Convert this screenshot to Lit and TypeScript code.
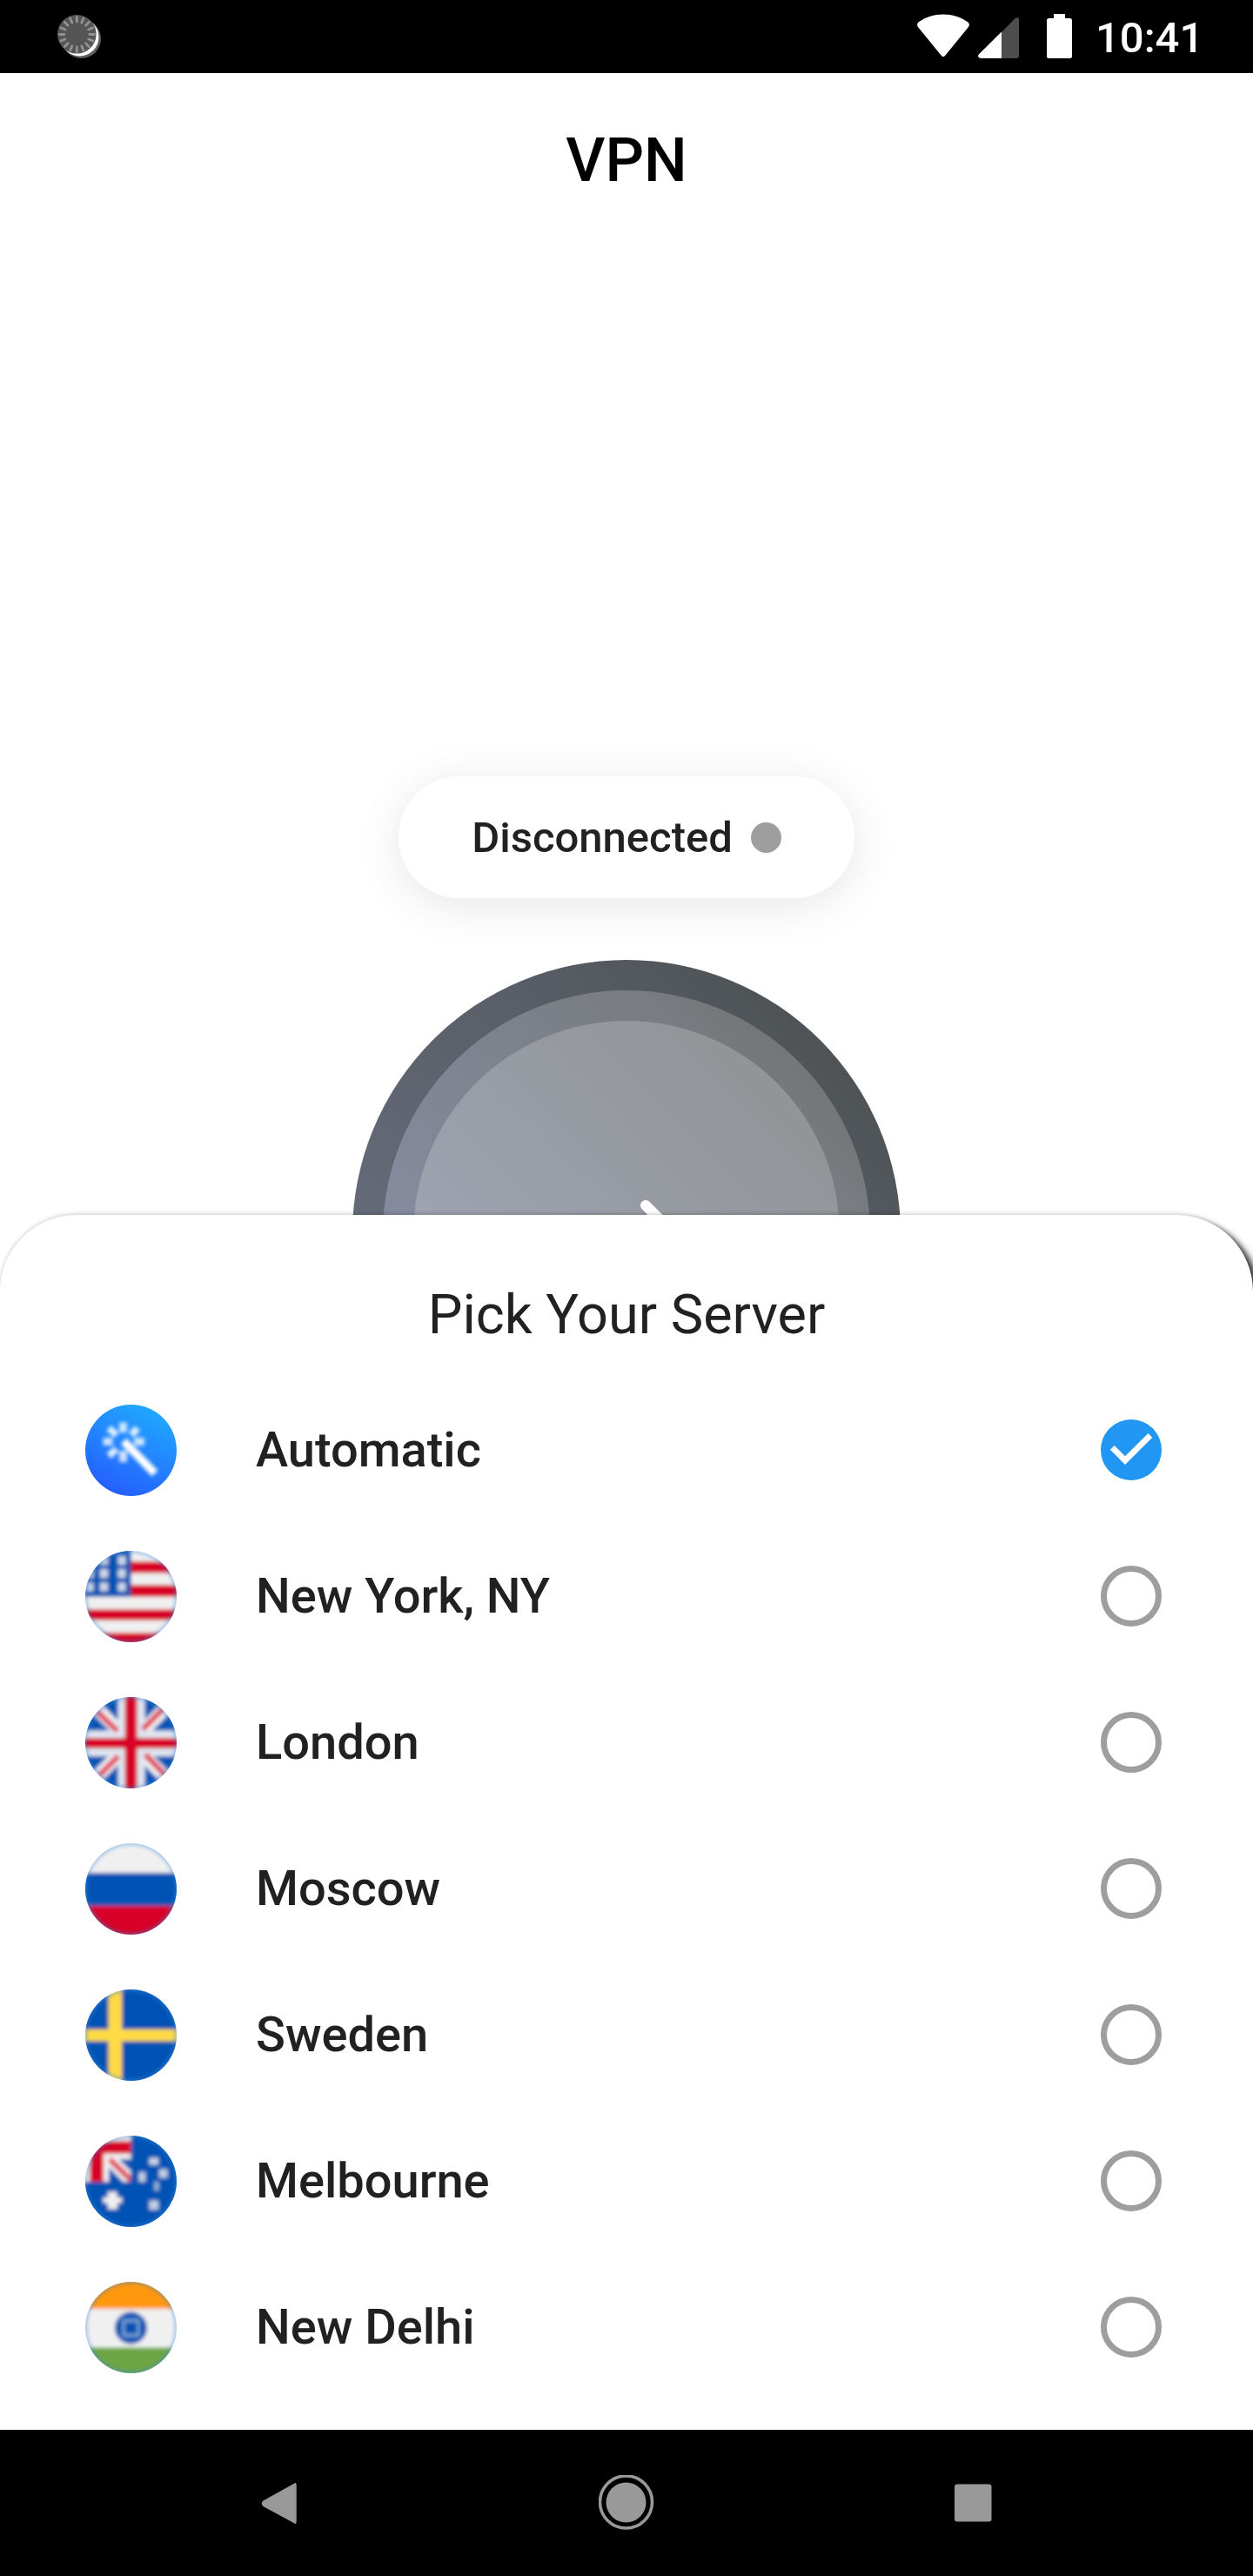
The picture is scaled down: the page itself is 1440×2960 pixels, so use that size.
import { LitElement, html, css, svg } from "lit";
import { customElement, property, state } from "lit/decorators.js";

type Flag = "auto" | "us" | "uk" | "ru" | "se" | "au" | "in";

interface Server {
  flag: Flag;
  name: string;
}

const SERVERS: Server[] = [
  { flag: "auto", name: "Automatic" },
  { flag: "us", name: "New York, NY" },
  { flag: "uk", name: "London" },
  { flag: "ru", name: "Moscow" },
  { flag: "se", name: "Sweden" },
  { flag: "au", name: "Melbourne" },
  { flag: "in", name: "New Delhi" },
];

const BLUE = "#0052b4";
const RED = "#d80027";
const PALE = "#f0f0f0";

const rect = (x: number, y: number, w: number, h: number, fill: string, opacity = 1) =>
  svg`<rect x=${x} y=${y} width=${w} height=${h} fill=${fill} opacity=${opacity} />`;

const line = (d: string, stroke: string, width: number) =>
  svg`<path d=${d} stroke=${stroke} stroke-width=${width} fill="none" />`;

const art: Record<Flag, () => unknown> = {
  auto: () => svg`
    <g stroke="#fff" fill="none">
      <path d="M44 42 L80 79" stroke-width="9.500" />
      <path d="M43.500 20.500 V32 M43.500 53 V66 M20.500 42.500 H31.500 M56 42.500 H68" stroke-width="9" opacity="0.780" />
      <path d="M27 27 L36 35 M60 27 L53 35 M27 59 L36 51" stroke-width="8" opacity="0.850" />
    </g>`,
  us: () => svg`
    ${rect(-5, -5, 115, 115, PALE)}
    ${rect(52, 12, 60, 13.5, RED)}
    ${rect(52, 39, 60, 14, RED)}
    ${rect(-5, 67, 115, 13, RED)}
    ${rect(-5, 94, 115, 16, RED)}
    ${rect(-5, -5, 57.5, 58, BLUE)}
    ${[11, 26, 41.5].map((y) => [5, 21.5, 42].map((x) => rect(x - 4.5, y - 5, 9, 10, PALE, 0.85)))}`,
  uk: () => svg`
    ${rect(-5, -5, 115, 115, BLUE)}
    ${line("M0 0 L105 105 M105 0 L0 105", PALE, 15)}
    ${rect(37.5, -5, 31, 115, "#dfe6f0")}
    ${rect(-5, 38.5, 115, 29.5, "#dfe6f0")}
    ${line("M12 15 L37 39 M91 12 L66 37 M15 91 L38 68 M69 66 L93 91", "#e2455f", 6.5)}
    ${rect(45.5, -5, 14, 115, RED)}
    ${rect(-5, 47, 115, 12, RED)}`,
  ru: () => svg`
    ${rect(-5, -5, 115, 40, PALE)}
    ${rect(-5, 34, 115, 38, BLUE)}
    ${rect(-5, 72, 115, 40, RED)}`,
  se: () => svg`
    ${rect(-5, -5, 115, 115, BLUE)}
    ${rect(26.5, -5, 15.5, 115, "#ffda44")}
    ${rect(-5, 46, 115, 13.5, "#ffda44")}`,
  au: () => svg`
    ${rect(-5, -5, 115, 115, BLUE)}
    ${rect(-5, -5, 57.5, 58, PALE)}
    ${rect(27, 27, 25.5, 26, BLUE)}
    ${line("M26 25 L52 51", PALE, 15)}
    ${rect(5, 6, 47.5, 14.5, RED)}
    ${rect(5, 6, 16, 47, RED)}
    ${line("M28 27 L52.500 51", "#e2455f", 6.5)}
    ${rect(52.5, 27, 20, 32, BLUE)}
    ${rect(-5, 53, 80, 12, BLUE)}
    <path d="M26 64.500 H36.500 V71 H42 V77.500 H37 V84.500 H26 V77.500 H20.500 V71 H26 Z" fill=${PALE} />
    ${rect(73.5, 25.5, 10.5, 8, PALE, 0.85)}
    ${rect(85, 38.5, 9.5, 10, PALE, 0.8)}
    ${rect(61.5, 42, 7.5, 11, PALE, 0.8)}
    ${rect(79.5, 53, 5, 10, PALE, 0.65)}
    ${rect(73.5, 74.5, 10.5, 10.5, PALE, 0.8)}`,
  in: () => svg`
    ${rect(-5, -5, 115, 36, "#ff9811")}
    ${rect(-5, 31, 115, 44.5, PALE)}
    ${rect(-5, 75.5, 115, 40, "#6da544")}
    <circle cx="52.500" cy="53" r="18.500" fill=${BLUE} />
    <rect x="44" y="44.500" width="17" height="17" fill="none" stroke="#7fa9da" stroke-width="3" />`,
};

@customElement("server-badge")
class ServerBadge extends LitElement {
  @property() flag: Flag = "auto";

  static styles = css`
    :host {
      display: block;
      width: 105px;
      height: 105px;
    }
    .art {
      display: block;
    }
  `;

  render() {
    const auto = this.flag === "auto";
    return html`<svg class="art" width="105" height="105" viewBox="0 0 105 105">
      <defs>
        <clipPath id="round"><circle cx="52.5" cy="52.5" r="52.5" /></clipPath>
        <filter id="soft" x="-10%" y="-10%" width="120%" height="120%">
          <feGaussianBlur stdDeviation="1.9" />
        </filter>
        <linearGradient id="sky" x1="0.3" y1="1" x2="0.75" y2="0.05">
          <stop offset="0" stop-color="#255cff" />
          <stop offset="1" stop-color="#20a8ff" />
        </linearGradient>
      </defs>
      <g clip-path="url(#round)">
        ${auto ? svg`<rect width="105" height="105" fill="url(#sky)" />` : null}
        <g filter="url(#soft)">${art[this.flag]()}</g>
        ${auto
          ? null
          : svg`<circle cx="52.5" cy="52.5" r="52.5" fill="none" stroke="#3c8be0" stroke-width="4" opacity="0.5" filter="url(#soft)" />`}
      </g>
    </svg>`;
  }
}

@customElement("server-row")
class ServerRow extends LitElement {
  @property() flag: Flag = "auto";
  @property() name = "";
  @property({ type: Boolean }) selected = false;

  static styles = css`
    :host {
      display: flex;
      align-items: center;
      height: 168px;
      padding: 0 105px 0 98px;
      box-sizing: border-box;
    }
    .name {
      flex: 1;
      margin-left: 91px;
      font: 500 56px/66px Roboto, sans-serif;
      color: #212121;
    }
    .ring {
      box-sizing: border-box;
      width: 70px;
      height: 70px;
      border: 7px solid #9e9e9e;
      border-radius: 50%;
    }
    .check {
      display: block;
    }
  `;

  render() {
    return html`
      <server-badge .flag=${this.flag}></server-badge>
      <span class="name">${this.name}</span>
      ${this.selected
        ? html`<svg class="check" width="70" height="70" viewBox="0 0 70 70">
            <circle cx="35" cy="35" r="35" fill="#2196f3" />
            <path d="M28 42.200 L15.700 29.900 L10.900 34.700 L28 52 L59.300 20.700 L54.500 15.900 Z" fill="#fff" />
          </svg>`
        : html`<span class="ring"></span>`}
    `;
  }
}

@customElement("status-bar")
class StatusBar extends LitElement {
  static styles = css`
    :host {
      display: flex;
      height: 84px;
      background: #000;
      box-sizing: border-box;
      padding: 0 56px 0 60px;
      justify-content: space-between;
    }
    .icons {
      display: flex;
    }
    .icon {
      display: block;
    }
    .signal {
      margin-left: 10px;
    }
    .battery {
      margin-left: 32px;
    }
    .clock {
      width: 125px;
      margin-left: 27px;
      padding-top: 15px;
      font: 500 49px/58px Roboto, sans-serif;
      color: #fff;
      white-space: nowrap;
    }
  `;

  render() {
    const ticks = Array.from({ length: 16 }, (_, i) => i * 22.5);
    return html`
      <svg class="icon" width="60" height="84" viewBox="60 0 60 84">
        <circle cx="93.500" cy="44.500" r="22.500" fill="#5e5e5e" />
        <circle cx="91.500" cy="42.500" r="22" fill="#fff" />
        <circle cx="88.300" cy="39.300" r="22.300" fill="#555" />
        ${ticks.map(
          (a) => svg`<path d="M88.300 19.500 V25" transform=${`rotate(${a} 88.300 39.500)`}
            stroke="#919191" stroke-width="2.800" stroke-linecap="round" />`,
        )}
      </svg>
      <div class="icons">
        <svg class="icon" width="60" height="84" viewBox="0 0 60 84">
          <path d="M1.500 25.500 C18 13.500 42 13.500 58.500 25.500 Q61 28 59 31 L32.500 63.500 Q30 67 27.500 63.500 L1 31 Q-1 28 1.500 25.500 Z" fill="#fff" />
        </svg>
        <svg class="icon signal" width="47" height="84" viewBox="0 0 47 84">
          <path d="M27 37 L43 20.800 Q47 18.500 47 23 V64 Q47 67 44 67 H27 Z" fill="#4d4d4d" />
          <path d="M27 36.500 V67 H3 Q-1.500 66 .8 62.500 Z" fill="#fff" />
        </svg>
        <svg class="icon battery" width="29" height="84" viewBox="0 0 29 84">
          <path d="M8 16 H21 V21 H26.500 Q29 21 29 23.500 V64.500 Q29 67 26.500 67 H2.500 Q0 67 0 64.500 V23.500 Q0 21 2.500 21 H8 Z" fill="#fff" />
        </svg>
        <span class="clock">10:41</span>
      </div>
    `;
  }
}

@customElement("nav-bar")
class NavBar extends LitElement {
  static styles = css`
    :host {
      display: flex;
      height: 168px;
      background: #000;
      align-items: center;
      justify-content: center;
      gap: 334px;
    }
    .icon {
      display: block;
    }
  `;

  render() {
    return html`
      <svg class="icon" width="64" height="64" viewBox="0 0 64 64">
        <path d="M47.500 10 Q50.700 7.500 50.700 12 V53.500 Q50.700 57.500 47.500 55 L12.500 36 Q9 32.500 12.500 29.500 Z" fill="#999" />
      </svg>
      <svg class="icon" width="64" height="64" viewBox="0 0 64 64">
        <circle cx="31.500" cy="31" r="30" fill="none" stroke="#999" stroke-width="3.600" />
        <circle cx="31.500" cy="31.500" r="23" fill="#999" />
      </svg>
      <svg class="icon" width="64" height="64" viewBox="0 0 64 64">
        <rect x="11" y="10.500" width="42.500" height="43" rx="3" fill="#999" />
      </svg>
    `;
  }
}

@customElement("app-root")
class AppRoot extends LitElement {
  @state() private selected = "Automatic";

  static styles = css`
    :host {
      display: flex;
      flex-direction: column;
      width: 1440px;
      height: 2960px;
      overflow: hidden;
      background: #fff;
      font-family: Roboto, sans-serif;
    }
    .home {
      display: flex;
      flex-direction: column;
      align-items: center;
      height: 1312px;
      flex: none;
    }
    .title {
      margin: 0;
      height: 200px;
      font: 500 70px/200px Roboto, sans-serif;
      color: #000;
    }
    .pill {
      display: flex;
      align-items: center;
      gap: 21px;
      box-sizing: border-box;
      height: 140px;
      margin-top: 608px;
      padding: 2px 84px 0;
      border-radius: 70px;
      background: #fff;
      box-shadow: 0 8px 52px rgba(0, 0, 0, 0.1);
      font: 500 49px/58px Roboto, sans-serif;
      color: #212121;
    }
    .dot {
      width: 35px;
      height: 35px;
      border-radius: 50%;
      background: #9e9e9e;
      margin-top: -2px;
    }
    .power {
      display: block;
      margin-top: 71px;
    }
    .sheet {
      position: relative;
      flex: 1;
      border-radius: 88px 88px 0 0;
      background: #fff;
      box-shadow: 0 -1px 5px rgba(0, 0, 0, 0.2), 8px 6px 7px rgba(0, 0, 0, 0.75);
    }
    .heading {
      margin: 0;
      padding: 78px 0 34px;
      text-align: center;
      font: 400 63px/74px Roboto, sans-serif;
      color: #212121;
    }
    .nav {
      position: relative;
    }
  `;

  render() {
    return html`
      <status-bar></status-bar>
      <main class="home">
        <h1 class="title">VPN</h1>
        <div class="pill"><span>Disconnected</span><span class="dot"></span></div>
        <svg class="power" width="630" height="293" viewBox="0 0 630 293">
          <defs>
            <linearGradient id="outer" x1="0" y1="1" x2="1" y2="0">
              <stop offset="0.22" stop-color="#666c7a" />
              <stop offset="0.72" stop-color="#555a61" />
              <stop offset="0.85" stop-color="#4f5355" />
            </linearGradient>
            <linearGradient id="middle" x1="0" y1="1" x2="1" y2="0">
              <stop offset="0.25" stop-color="#868ca0" />
              <stop offset="0.75" stop-color="#797c81" />
              <stop offset="0.85" stop-color="#747778" />
            </linearGradient>
            <linearGradient id="inner" x1="0" y1="1" x2="1" y2="0">
              <stop offset="0.25" stop-color="#9fa3b1" />
              <stop offset="0.72" stop-color="#94979c" />
              <stop offset="0.85" stop-color="#929597" />
            </linearGradient>
          </defs>
          <circle cx="315" cy="315" r="315" fill="url(#outer)" />
          <circle cx="315" cy="315" r="280" fill="url(#middle)" />
          <circle cx="315" cy="315" r="245" fill="url(#inner)" />
          <path d="M337 282 L377 322" fill="none" stroke="#fff" stroke-width="12" stroke-linecap="round" />
        </svg>
      </main>
      <section class="sheet">
        <h2 class="heading">Pick Your Server</h2>
        ${SERVERS.map(
          (s) => html`<server-row
            .flag=${s.flag}
            .name=${s.name}
            .selected=${s.name === this.selected}
            @click=${() => (this.selected = s.name)}
          ></server-row>`,
        )}
      </section>
      <nav-bar class="nav"></nav-bar>
    `;
  }
}
